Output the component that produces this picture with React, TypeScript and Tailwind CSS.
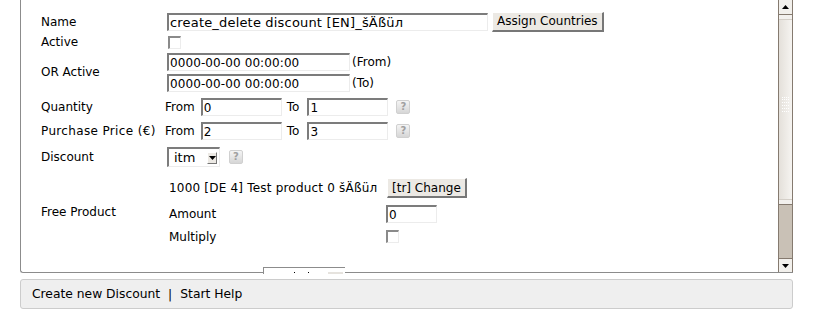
import React from "react";

function Field({ value, className }: { value: string; className: string }) {
  return (
    <input
      readOnly
      value={value}
      className={`h-[18px] bg-white border-t-2 border-l-2 border-b border-r border-t-[#7c7c7c] border-l-[#7c7c7c] border-b-[#ececec] border-r-[#ececec] px-[1px] leading-[15px] text-black outline-none ${className}`}
    />
  );
}

function Btn({ children }: { children: React.ReactNode }) {
  return (
    <div className="h-[20px] flex items-center px-[4px] bg-[#ece9e4] border-t border-l border-b-2 border-r-2 border-t-white border-l-white border-b-[#777] border-r-[#777] whitespace-nowrap">
      {children}
    </div>
  );
}

function Check() {
  return (
    <div className="w-[13px] h-[13px] bg-white border-t-2 border-l-2 border-b border-r border-t-[#8a8a8a] border-l-[#8a8a8a] border-b-[#ececec] border-r-[#ececec]" />
  );
}

function Help() {
  return (
    <div className="w-[14px] h-[14px] rounded-[2px] border border-[#d0d0d0] bg-gradient-to-b from-[#f4f4f4] to-[#d6d6d6] flex items-center justify-center text-[10px] leading-none text-[#a0a0a0] font-bold">
      ?
    </div>
  );
}

function Label({ children }: { children: React.ReactNode }) {
  return <div className="flex items-center whitespace-nowrap">{children}</div>;
}

export default function App() {
  return (
    <div className="relative w-[814px] h-[316px] overflow-hidden bg-white text-[12px] text-black font-['DejaVu_Sans',sans-serif]">
      {/* Form panel (scrolled) */}
      <div className="ml-[20px] w-[773px] h-[273px] flex border-l border-b border-[#8c8c8c] rounded-bl-[3px]">
        <div className="flex-1 pl-[20px] pt-[11px]">
          <div className="grid grid-cols-[126px_1fr]">
            {/* Name */}
            <Label>Name</Label>
            <div className="h-[21px] flex items-center gap-[4px]">
              <Field value="create_delete discount [EN]_šÄßüл" className="w-[321px] text-[13px] tracking-[0.18px]" />
              <Btn>Assign Countries</Btn>
            </div>

            {/* Active */}
            <Label>Active</Label>
            <div className="h-[20px] flex items-center pl-[1px]">
              <Check />
            </div>

            {/* OR Active */}
            <Label>OR Active</Label>
            <div className="mt-[1px] flex flex-col gap-[3px]">
              <div className="flex items-center gap-[2px]">
                <Field value="0000-00-00 00:00:00" className="w-[183px] text-[12px] tracking-[0.1px]" />
                <span>(From)</span>
              </div>
              <div className="flex items-center gap-[2px]">
                <Field value="0000-00-00 00:00:00" className="w-[183px] text-[12px] tracking-[0.1px]" />
                <span>(To)</span>
              </div>
            </div>

            {/* Quantity */}
            <Label>
              <span className="mt-[6px]">Quantity</span>
            </Label>
            <div className="mt-[6px] -ml-[2px] flex items-center">
              <span className="mr-[6px]">From</span>
              <Field value="0" className="w-[81px] text-[12px]" />
              <span className="ml-[5px] mr-[8px]">To</span>
              <Field value="1" className="w-[81px] text-[12px]" />
              <div className="ml-[8px]">
                <Help />
              </div>
            </div>

            {/* Purchase price */}
            <Label>
              <span className="mt-[6px] tracking-[0.35px]">Purchase Price (€)</span>
            </Label>
            <div className="mt-[6px] -ml-[2px] flex items-center">
              <span className="mr-[6px]">From</span>
              <Field value="2" className="w-[81px] text-[12px]" />
              <span className="ml-[5px] mr-[8px]">To</span>
              <Field value="3" className="w-[81px] text-[12px]" />
              <div className="ml-[8px]">
                <Help />
              </div>
            </div>

            {/* Discount */}
            <Label>
              <span className="mt-[7px]">Discount</span>
            </Label>
            <div className="mt-[7px] flex items-center">
              <div className="w-[53px] h-[20px] flex items-center bg-white border-t-2 border-l-2 border-b border-r border-t-[#7c7c7c] border-l-[#7c7c7c] border-b-[#ececec] border-r-[#ececec]">
                <span className="ml-[5px] w-[33px] text-[13px]">itm</span>
                <div className="w-[10px] h-[12px] bg-[#ece9e4] border-t border-l border-b border-r border-t-white border-l-white border-b-[#777] border-r-[#777] flex items-center justify-center">
                  <svg width="7" height="4" viewBox="0 0 7 4">
                    <path d="M0 0h7L3.5 4z" fill="#000" />
                  </svg>
                </div>
              </div>
              <div className="ml-[9px]">
                <Help />
              </div>
            </div>

            {/* Free product */}
            <Label>
              <span className="mt-[11px]">Free Product</span>
            </Label>
            <div className="mt-[11px] pl-[2px] grid grid-cols-[217px_auto] justify-start">
              <div className="h-[20px] flex items-center whitespace-nowrap tracking-[0.2px]">
                1000 [DE 4] Test product 0 šÄßüл
              </div>
              <div className="pl-[1px]">
                <Btn>[tr] Change</Btn>
              </div>
              <div className="mt-[7px] h-[18px] flex items-center">Amount</div>
              <div className="mt-[7px]">
                <Field value="0" className="w-[51px] text-[12px]" />
              </div>
              <div className="mt-[4px] h-[18px] flex items-center">Multiply</div>
              <div className="mt-[4px] h-[18px] flex items-center">
                <Check />
              </div>
            </div>
          </div>
        </div>

        {/* Scrollbar */}
        <div className="w-[15px] h-[272px] flex flex-col border-x border-[#857a6f] bg-[#c9c1b6]">
          <div className="h-[15px] flex items-center justify-center bg-[#f2f0ec] border-b border-[#857a6f]">
            <svg width="7" height="4" viewBox="0 0 7 4">
              <path d="M3.5 0L7 4H0z" fill="#000" />
            </svg>
          </div>
          <div className="h-[190px] flex flex-col bg-gradient-to-r from-[#e4e0da] to-[#f6f4f1] border-b border-[#857a6f]">
            <div className="h-[5px] border-b border-[#d4cfc8] bg-[#f3f1ee]" />
            <div className="flex-1 flex items-center justify-center">
              <div className="grid grid-cols-4 gap-[1px] w-[7px] h-[16px] -mt-[10px]">
                {Array.from({ length: 24 }).map((_, i) => (
                  <div key={i} className="w-[1px] h-[1px] bg-white" />
                ))}
              </div>
            </div>
            <div className="h-[5px] border-t border-[#d4cfc8] bg-[#f3f1ee]" />
          </div>
          <div className="flex-1" />
          <div className="h-[14px] flex items-center justify-center bg-[#f2f0ec] border-t border-[#857a6f]">
            <svg width="7" height="4" viewBox="0 0 7 4">
              <path d="M0 0h7L3.5 4z" fill="#000" />
            </svg>
          </div>
        </div>
      </div>

      {/* clipped dropdown peeking over panel edge */}
      <div className="absolute left-[263px] top-[267px] w-[82px] h-[7px] bg-white border-t border-l border-[#8c8c8c] flex items-end">
        <div className="ml-[30px] w-[1px] h-[1px] bg-black mb-[1px]" />
        <div className="ml-[13px] w-[1px] h-[1px] bg-black mb-[1px]" />
        <div className="ml-[19px] w-[15px] h-[2px] bg-[#e6e3de]" />
      </div>

      {/* Footer bar */}
      <div className="mx-[20px] mt-[6px] w-[773px] h-[30px] flex items-center pl-[11px] bg-[#efefef] border border-[#cccccc] rounded-[3px] text-[12.3px]">
        <span>Create new Discount</span>
        <span className="px-[8px]">|</span>
        <span>Start Help</span>
      </div>
    </div>
  );
}
